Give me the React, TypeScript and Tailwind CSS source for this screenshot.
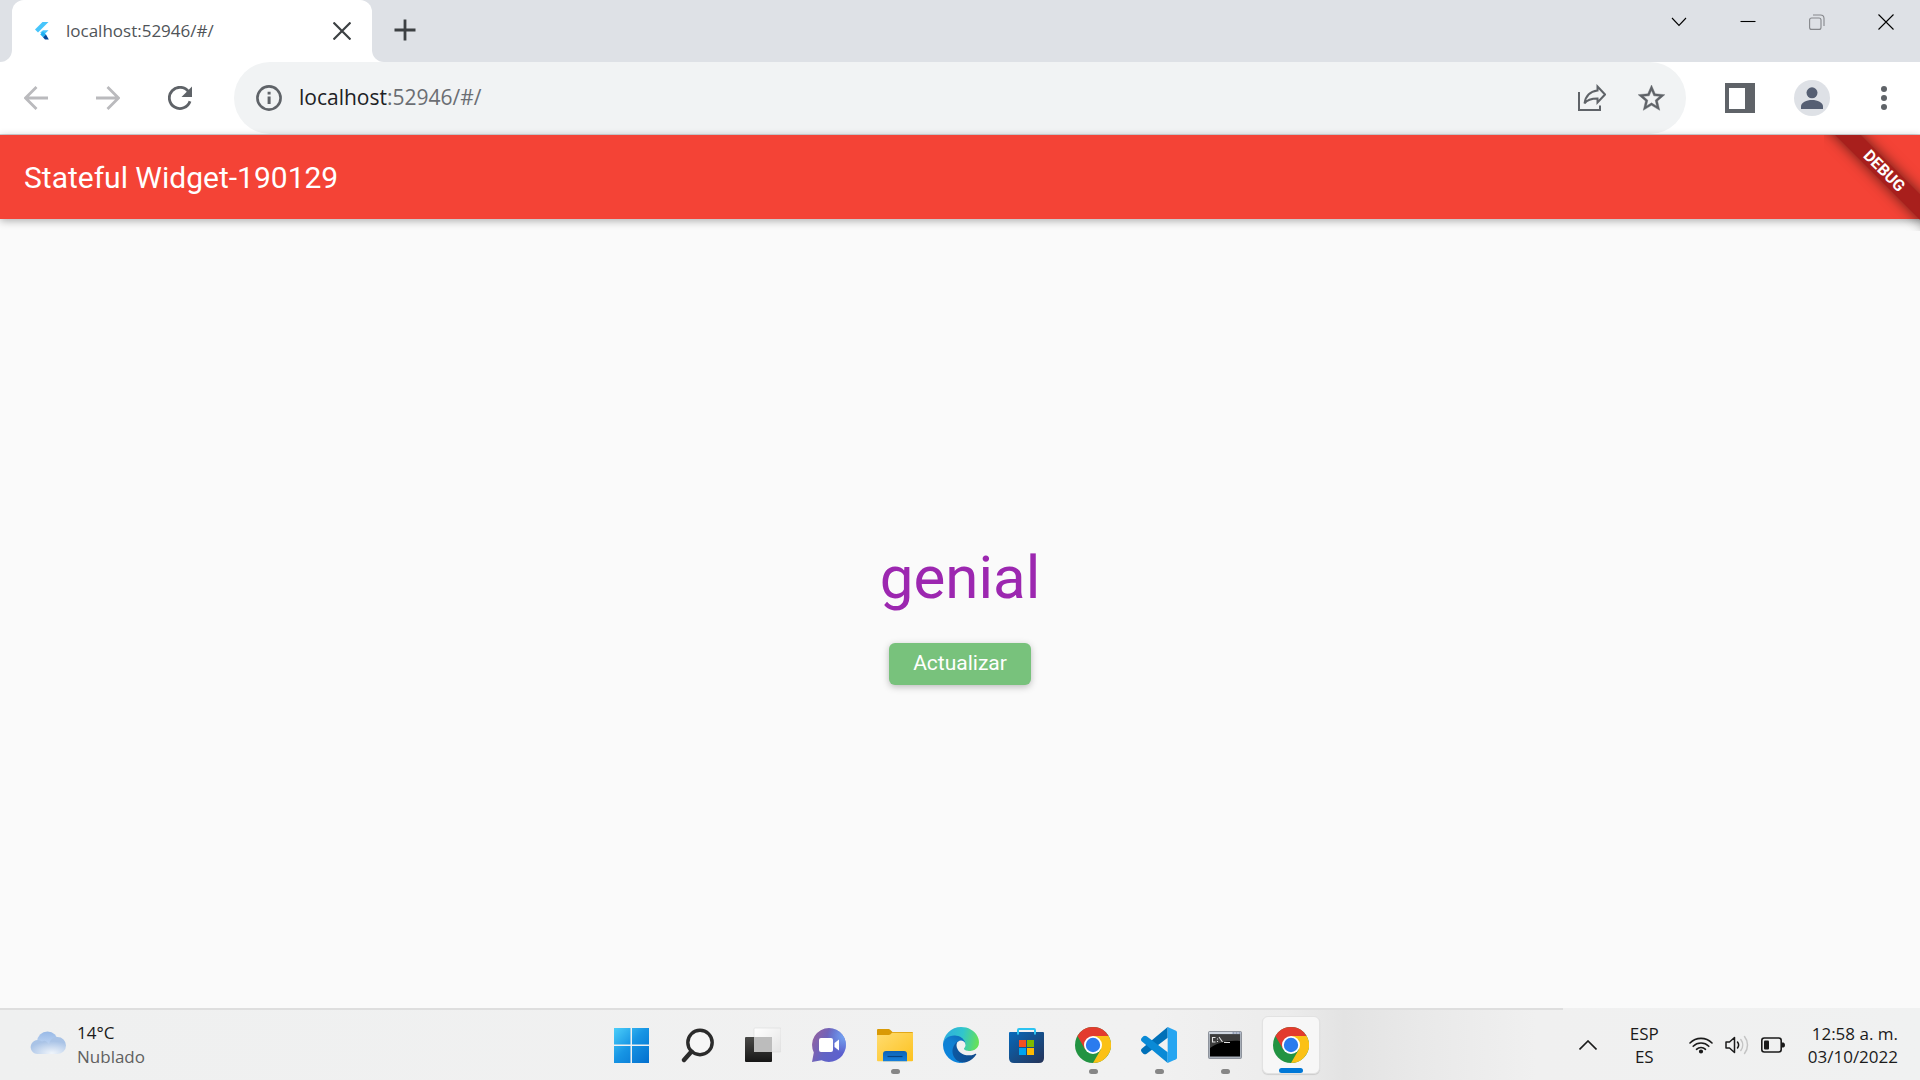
import type { ReactNode } from "react";

const UI = "font-['Open_Sans','Noto_Sans',sans-serif]";

/* ---------- browser icons ---------- */

function FlutterIcon() {
  return (
    <svg viewBox="0 0 16 20" className="h-5 w-4">
      <path d="M8.500 1H14.500L4 11.400 1 8.600Z" fill="#47c5fb" />
      <path d="M9 9.300H14.500L9.500 14.200 6.200 11.600Z" fill="#47c5fb" />
      <path d="M6.200 13.200 9 10.700 12 13.400 9 16.200Z" fill="#1fb0f2" />
      <path d="M9 16.200 12 13.400 14.800 18.500H11Z" fill="#00479a" />
    </svg>
  );
}

function ArrowIcon({ flip = false }: { flip?: boolean }) {
  return (
    <svg viewBox="0 0 24 24" className="size-6" fill="none" stroke="#bababd" strokeWidth="2.8">
      {flip ? <path d="M0 12H22.5M11.5 1 22.5 12 11.5 23" /> : <path d="M24 12H1.5M12.5 1 1.5 12 12.5 23" />}
    </svg>
  );
}

function ReloadIcon() {
  return (
    <svg viewBox="0 0 24 24" className="size-6">
      <path d="M20.6 5.8A10.6 10.6 0 1 0 22 15.2" fill="none" stroke="#5f6368" strokeWidth="2.8" />
      <path d="M24 .5V11H13.5Z" fill="#5f6368" />
    </svg>
  );
}

function InfoIcon() {
  return (
    <svg viewBox="0 0 26 26" className="size-[26px]">
      <circle cx="13" cy="13" r="11.6" fill="none" stroke="#5f6368" strokeWidth="2.6" />
      <path d="M11.6 6.7h3v2.8h-3zM11.6 11.5h3v7.5h-3z" fill="#5f6368" />
    </svg>
  );
}

function ShareIcon() {
  return (
    <svg viewBox="0 0 28 28" className="size-7" fill="none" stroke="#5f6368" strokeWidth="2">
      <path d="M1 8V26H22V21.5" />
      <path d="M19.5 2.5 27 10.5 19.5 18.5V14.5C13.500 14.500 9 16 6.500 19.500 7.500 12 11.500 7.500 19.500 6.500Z" />
    </svg>
  );
}

function StarIcon() {
  return (
    <svg viewBox="2 2 20 19.500" className="h-[26px] w-[27px]" fill="#5f6368" stroke="#5f6368" strokeWidth=".3">
      <path d="M22 9.240l-7.190-.620L12 2 9.190 8.630 2 9.240l5.460 4.730L5.820 21 12 17.270 18.180 21l-1.630-7.030L22 9.240zM12 15.400l-3.760 2.270 1-4.280-3.320-2.880 4.380-.380L12 6.100l1.710 4.040 4.380.380-3.320 2.880 1 4.280L12 15.400z" />
    </svg>
  );
}

function PanelIcon() {
  return (
    <svg viewBox="0 0 30 30" className="size-[30px]">
      <path fillRule="evenodd" d="M0 0H30V30H0ZM4 5V26H20V5Z" fill="#5f6368" />
    </svg>
  );
}

function AvatarIcon() {
  return (
    <svg viewBox="0 0 36 36" className="size-9">
      <circle cx="18" cy="18" r="18" fill="#dee1e6" />
      <circle cx="18" cy="12.800" r="5.500" fill="#565f73" />
      <path d="M7 29V26.500C7 22.500 12.500 20 18 20S29 22.500 29 26.500V29Z" fill="#565f73" />
    </svg>
  );
}

function DotsIcon() {
  return (
    <svg viewBox="0 0 6 26" className="h-[26px] w-1.5" fill="#5f6368">
      <circle cx="3" cy="4" r="3" />
      <circle cx="3" cy="13" r="3" />
      <circle cx="3" cy="22" r="3" />
    </svg>
  );
}

/* ---------- taskbar icons ---------- */

function CloudIcon() {
  return (
    <svg viewBox="0 0 36 24" className="mb-1 h-6 w-9">
      <defs>
        <linearGradient id="cloudBack" x1="0" y1="0" x2="0" y2="1">
          <stop offset="0" stopColor="#98b9e6" />
          <stop offset="1" stopColor="#d3e4fa" />
        </linearGradient>
        <radialGradient id="cloudFront" cx=".6" cy=".95" r=".7">
          <stop offset="0" stopColor="#f0f5fb" />
          <stop offset="1" stopColor="#a9c3e6" />
        </radialGradient>
      </defs>
      <circle cx="17.500" cy="11" r="10.500" fill="url(#cloudBack)" />
      <path d="M7.500 23A7 7 0 1 1 12 10.500C15 8.500 17 11 19 13 20 8.500 23.500 6 27.500 6A8.500 8.500 0 0 1 27.500 23Z" fill="url(#cloudFront)" />
    </svg>
  );
}

function WindowsIcon() {
  return (
    <svg viewBox="0 0 36 36" className="size-9">
      <defs>
        <linearGradient id="win" x1="0" y1="0" x2="35" y2="35" gradientUnits="userSpaceOnUse">
          <stop offset="0" stopColor="#4fd2fb" />
          <stop offset=".5" stopColor="#1795e4" />
          <stop offset="1" stopColor="#0471cf" />
        </linearGradient>
      </defs>
      <path d="M1 1H17.500V17.500H1ZM19 1H36V17.500H19ZM1 19H17.500V36H1ZM19 19H36V36H19Z" fill="url(#win)" />
    </svg>
  );
}

function SearchIcon() {
  return (
    <svg viewBox="0 0 36 36" className="size-9" fill="none" stroke="#2b2b2b">
      <circle cx="21" cy="15.500" r="12.200" strokeWidth="3.400" fill="#f6f6f6" />
      <path d="M12.500 24.500 5 33" strokeWidth="4.400" strokeLinecap="round" />
    </svg>
  );
}

function TaskViewIcon() {
  return (
    <svg viewBox="0 0 36 36" className="size-9">
      <defs>
        <linearGradient id="tvDark" x1="0" y1="0" x2="0" y2="1">
          <stop offset="0" stopColor="#4a4a48" />
          <stop offset="1" stopColor="#161616" />
        </linearGradient>
        <linearGradient id="tvLight" x1="0" y1="0" x2="1" y2="1">
          <stop offset="0" stopColor="#ffffff" />
          <stop offset="1" stopColor="#e4e4e4" />
        </linearGradient>
      </defs>
      <rect x="9" y="1" width="27" height="24" rx="1" fill="url(#tvLight)" stroke="#dadada" strokeWidth=".6" />
      <rect x="0" y="10" width="27" height="25" rx="1" fill="url(#tvDark)" />
      <path d="M9 10H27V25H9Z" fill="#bcbcbc" />
    </svg>
  );
}

function ChatIcon() {
  return (
    <svg viewBox="0 0 36 36" className="size-9">
      <defs>
        <linearGradient id="chat" x1="0" y1=".2" x2="1" y2=".7">
          <stop offset="0" stopColor="#94619f" />
          <stop offset=".5" stopColor="#6264c4" />
          <stop offset="1" stopColor="#5b5fd0" />
        </linearGradient>
        <radialGradient id="chatGlow" cx=".95" cy=".25" r=".5">
          <stop offset="0" stopColor="#74a4f2" />
          <stop offset="1" stopColor="#74a4f2" stopOpacity="0" />
        </radialGradient>
      </defs>
      <path d="M18 1A17 17 0 1 1 10.500 33.300L1 35 2.800 25.500A17 17 0 0 1 18 1Z" fill="url(#chat)" />
      <path d="M18 1A17 17 0 1 1 10.500 33.300L1 35 2.800 25.500A17 17 0 0 1 18 1Z" fill="url(#chatGlow)" />
      <rect x="8" y="11" width="14" height="14" rx="2" fill="#fff" />
      <path d="M23.500 16 28 12.500V23.500L23.500 20Z" fill="#fff" />
    </svg>
  );
}

function FolderIcon() {
  return (
    <svg viewBox="0 0 36 36" className="size-9">
      <defs>
        <linearGradient id="folder" x1="0" y1="0" x2="1" y2="1">
          <stop offset="0" stopColor="#ffdc70" />
          <stop offset="1" stopColor="#fdc21f" />
        </linearGradient>
        <linearGradient id="folderBlue" x1="0" y1="0" x2="0" y2="1">
          <stop offset="0" stopColor="#0d62b5" />
          <stop offset="1" stopColor="#1580dd" />
        </linearGradient>
      </defs>
      <path d="M0 3Q0 2 1 2H11.500Q12.500 2 13.200 2.800L15.500 5H35Q36 5 36 6V12H0Z" fill="#d99a06" />
      <path d="M0 8H11.500Q12.800 8 13.600 7.200L15 5.800H36V33.500Q36 34.300 35 34.300H1Q0 34.300 0 33.500Z" fill="url(#folder)" />
      <path d="M6 34.300V27Q6 24 9 24H27Q30 24 30 27V34.300Z" fill="url(#folderBlue)" />
      <path d="M10.500 29.500H25.500" stroke="#08427f" strokeWidth="1.200" />
    </svg>
  );
}

function EdgeIcon() {
  return (
    <svg viewBox="0 0 256 256" className="size-9">
      <defs>
        <linearGradient id="edgeA" x1="59" y1="177" x2="237" y2="177" gradientUnits="userSpaceOnUse">
          <stop offset="0" stopColor="#0c59a4" />
          <stop offset="1" stopColor="#114a8b" />
        </linearGradient>
        <linearGradient id="edgeB" x1="136" y1="80" x2="40" y2="215" gradientUnits="userSpaceOnUse">
          <stop offset="0" stopColor="#0f6fbe" />
          <stop offset=".4" stopColor="#1180d2" />
          <stop offset="1" stopColor="#0b84dc" />
        </linearGradient>
        <linearGradient id="edgeC" x1="20" y1="60" x2="245" y2="110" gradientUnits="userSpaceOnUse">
          <stop offset="0" stopColor="#2eb0dd" />
          <stop offset=".5" stopColor="#31c6cc" />
          <stop offset=".8" stopColor="#4fd58a" />
          <stop offset="1" stopColor="#66e05a" />
        </linearGradient>
      </defs>
      <path fill="url(#edgeA)" d="M231 190.500c-3.400 1.800-6.900 3.400-10.500 4.800a102 102 0 0 1-36 6.400c-47.300 0-88.500-32.500-88.500-74.300a31.500 31.500 0 0 1 16.400-27.500c-42.800 1.800-53.800 46.400-53.800 72.500 0 74 68.100 81.500 82.900 81.500 7.900 0 19.800-2.300 27-4.600l1.300-.4a128.300 128.300 0 0 0 66.600-52.800 4 4 0 0 0-5.400-5.600z" />
      <path fill="url(#edgeB)" d="M105.700 241.400a79.200 79.200 0 0 1-22.700-21.300 80.700 80.700 0 0 1 29.500-120.200c3.100-1.400 8.400-4.100 15.500-4a32.400 32.400 0 0 1 25.700 13 31.900 31.900 0 0 1 6.300 18.700c0-.2 24.500-79.600-80-79.600-43.900 0-80 41.700-80 78.200a130.200 130.200 0 0 0 12.100 56 128 128 0 0 0 156.400 67.100 75.500 75.500 0 0 1-62.800-7.900z" />
      <path fill="url(#edgeC)" d="M152.300 148.900c-.8 1-3.300 2.500-3.300 5.600 0 2.600 1.700 5.100 4.700 7.200 14.400 10 41.500 8.700 41.600 8.700a59.600 59.600 0 0 0 30.200-8.300 61.400 61.400 0 0 0 30.400-52.900c.3-22.400-8-37.300-11.300-43.900C223.500 23.900 177.700 0 128 0A128 128 0 0 0 0 126.200c.5-36.500 36.800-66 80-66 3.500 0 23.500.3 42 10a72.600 72.600 0 0 1 30.900 29.300c6.100 10.600 7.200 24.100 7.200 29.500s-2.700 13.300-7.800 19.900z" />
    </svg>
  );
}

function StoreIcon() {
  return (
    <svg viewBox="0 0 36 36" className="size-9">
      <defs>
        <linearGradient id="store" x1="0" y1="0" x2="1" y2="1">
          <stop offset="0" stopColor="#0669bb" />
          <stop offset="1" stopColor="#263357" />
        </linearGradient>
      </defs>
      <path d="M0 6Q0 5 1 5H34Q35 5 35 6V31Q35 36 30 36H5Q0 36 0 31Z" fill="url(#store)" />
      <path d="M9 7.500V3Q9 2 10 2H25Q26 2 26 3V7.500" fill="none" stroke="#2cc3f1" strokeWidth="2" />
      <path d="M10 13H17V20H10Z" fill="#f25022" />
      <path d="M18 13H25V20H18Z" fill="#7fba00" />
      <path d="M10 21H17V28H10Z" fill="#00a4ef" />
      <path d="M18 21H25V28H18Z" fill="#ffb900" />
    </svg>
  );
}

function ChromeIcon() {
  return (
    <svg viewBox="0 0 48 48" className="size-9">
      <circle cx="24" cy="24" r="24" fill="#229342" />
      <path d="M24 12H44.785A24 24 0 0 1 24 48L34.400 30 24 24Z" fill="#fbc116" />
      <path d="M24 12H44.785A24 24 0 0 0 3.215 12L13.600 30 24 24Z" fill="#e33b2e" />
      <circle cx="24" cy="24" r="12" fill="#fff" />
      <circle cx="24" cy="24" r="9.600" fill="#2b7bee" />
    </svg>
  );
}

function VsCodeIcon() {
  return (
    <svg viewBox="0 0 108 108" className="size-9">
      <path d="M80 0V32L17 80Q12 84 7 80L2 75Q-2 70 2 65Z" fill="#0070b8" />
      <path d="M17 28 80 76V108L2 43Q-2 38 2 33L7 28Q12 24 17 28Z" fill="#0a8ad6" />
      <path d="M80 0 105 11Q108 13 108 16V92Q108 95 105 97L80 108Z" fill="#26a5f1" />
    </svg>
  );
}

function TerminalIcon() {
  return (
    <svg viewBox="0 0 36 36" className="size-9">
      <rect x="1.500" y="4.500" width="33" height="27" rx="1" fill="#a9b0ba" stroke="#7d848e" strokeWidth=".8" />
      <path d="M2 5H34V7H2Z" fill="#cfd6e0" />
      <path d="M25.500 5.500h2v1h-2zM28.500 5.500h2v1h-2zM31.500 5.500h2v1h-2z" fill="#5b6b90" />
      <path d="M3 7.500H33V29.500H3Z" fill="#000" />
      <path d="M3 7.500H33V14C20 13 10 16 3 21Z" fill="#3c3c3c" />
      <path d="M8.500 10.500H5.500V15H8.500M10.500 11.500v1M10.500 14v1M12 10 15.500 15M17 15.500H23" fill="none" stroke="#e2e2e2" strokeWidth="1.100" />
    </svg>
  );
}

function WifiIcon() {
  return (
    <svg viewBox="0 0 24 18" className="h-[18px] w-6" fill="none" stroke="#1b1b1b" strokeWidth="1.600" strokeLinecap="round">
      <path d="M1 7A15.500 15.500 0 0 1 23 7" />
      <path d="M4.200 10.300A11 11 0 0 1 19.800 10.300" />
      <path d="M7.500 13.300A6.500 6.500 0 0 1 16.500 13.300" />
      <circle cx="12" cy="15.500" r="1.300" fill="#1b1b1b" />
    </svg>
  );
}

function VolumeIcon() {
  return (
    <svg viewBox="0 0 24 20" className="h-5 w-6" fill="none" stroke="#1b1b1b" strokeWidth="1.500" strokeLinecap="round" strokeLinejoin="round">
      <path d="M1 7H4.500L9.500 2.500V17.500L4.500 13H1Z" />
      <path d="M12.500 7A5 5 0 0 1 12.500 13" />
      <path d="M15.800 4.500A9 9 0 0 1 15.800 15.500M19.500 1.500A13.500 13.500 0 0 1 19.500 18.500" stroke="#c4c4c4" />
    </svg>
  );
}

function BatteryIcon() {
  return (
    <svg viewBox="0 0 24 16" className="h-4 w-6">
      <rect x=".8" y="1" width="19.400" height="14" rx="2.500" fill="none" stroke="#1b1b1b" strokeWidth="1.600" />
      <rect x="3" y="3.500" width="5" height="9" rx="1" fill="#1b1b1b" />
      <path d="M21 5.500h1.500Q24 6 24 8t-1.500 2.500H21Z" fill="#1b1b1b" />
    </svg>
  );
}

/* ---------- browser window ---------- */

function WindowButton({ label, children }: { label: string; children: ReactNode }) {
  return (
    <button aria-label={label} className="grid h-11 w-[69px] place-items-center">
      <svg viewBox="0 0 16 16" className="size-4" fill="none" stroke="#000" strokeWidth="1.100">
        {children}
      </svg>
    </button>
  );
}

function TabStrip() {
  return (
    <div className="flex h-[62px] bg-white">
      <div className="w-3 rounded-br-xl bg-[#dee1e6]" />
      <div className="bg-[#dee1e6]">
        <div className="flex h-full w-[360px] items-center rounded-t-xl bg-white pl-[22px] pr-[21px]">
          <FlutterIcon />
          <span className="ml-4 flex-1 text-[17px] text-[#505458]">localhost:52946/#/</span>
          <button aria-label="Cerrar pestaña">
            <svg viewBox="0 0 18 18" className="size-[18px]" fill="none" stroke="#3c4043" strokeWidth="2.200">
              <path d="M.5.500 17.500 17.500M17.500.500.500 17.500" />
            </svg>
          </button>
        </div>
      </div>
      <div className="flex flex-1 items-start justify-between rounded-bl-xl bg-[#dee1e6]">
        <button aria-label="Nueva pestaña" className="grid h-[60px] w-[66px] place-items-center">
          <svg viewBox="0 0 22 22" className="size-[22px]" stroke="#3c4043" strokeWidth="2.800">
            <path d="M11 .5V21.500M.5 11H21.500" />
          </svg>
        </button>
        <div className="flex">
          <WindowButton label="Buscar pestañas">
            <path d="M1 4 8 11.500 15 4" />
          </WindowButton>
          <WindowButton label="Minimizar">
            <path d="M.5 7.500H15.500" />
          </WindowButton>
          <WindowButton label="Restaurar">
            <g stroke="#85878b">
              <rect x=".6" y="4" width="11.400" height="11.400" rx="2" />
              <path d="M4 1H11.500Q15 1 15 4.500V12" />
            </g>
          </WindowButton>
          <WindowButton label="Cerrar">
            <path d="M.5.500 15.500 15.500M15.500.500.500 15.500" />
          </WindowButton>
        </div>
      </div>
    </div>
  );
}

function ToolButton({ label, children }: { label: string; children: ReactNode }) {
  return (
    <button aria-label={label} className="grid h-[72px] w-[72px] place-items-center">
      {children}
    </button>
  );
}

function Toolbar() {
  return (
    <div className="flex h-[73px] border-b border-[#d3d5d8] bg-white">
      <ToolButton label="Atrás"><ArrowIcon /></ToolButton>
      <ToolButton label="Adelante"><ArrowIcon flip /></ToolButton>
      <ToolButton label="Recargar"><ReloadIcon /></ToolButton>
      <div className="mx-[18px] flex flex-1 items-center rounded-full bg-[#f1f3f4] pl-[22px] pr-[21px]">
        <button aria-label="Información del sitio"><InfoIcon /></button>
        <p className="ml-[17px] flex-1 text-[21px] text-[#6b6e73]">
          <span className="text-[#202124]">localhost</span>:52946/#/
        </p>
        <button aria-label="Compartir" className="mr-8"><ShareIcon /></button>
        <button aria-label="Añadir a marcadores"><StarIcon /></button>
      </div>
      <ToolButton label="Panel lateral"><PanelIcon /></ToolButton>
      <ToolButton label="Perfil"><AvatarIcon /></ToolButton>
      <ToolButton label="Menú"><DotsIcon /></ToolButton>
    </div>
  );
}

function FlutterApp() {
  return (
    <main className="relative flex flex-1 flex-col bg-[#fafafa] font-[Roboto,sans-serif]">
      <header className="flex h-[84px] items-center bg-[#f44336] px-6 shadow-[0_2px_8px_rgba(0,0,0,0.3)]">
        <h1 className="text-[30px] text-white">Stateful Widget-190129</h1>
      </header>
      <div className="absolute right-0 top-0 size-24 overflow-hidden">
        <div className="absolute -right-16 top-[27px] flex h-[18px] w-[200px] rotate-45 items-center justify-center bg-[#a81f1c] text-[16px] font-bold text-white shadow-[0_0_14px_rgba(0,0,0,0.6)]">
          DEBUG
        </div>
      </div>
      <section className="flex flex-1 flex-col items-center justify-center gap-[30px]">
        <p className="text-[60px] leading-[70px] text-[#9c27b0]">genial</p>
        <button className="h-[42px] rounded-md bg-[#78c27c] px-6 text-[21px] text-white shadow-[0_2px_7px_rgba(0,0,0,0.25)]">
          Actualizar
        </button>
      </section>
    </main>
  );
}

/* ---------- taskbar ---------- */

type TaskItem = { label: string; icon: ReactNode; state?: "open" | "active" };

const tasks: TaskItem[] = [
  { label: "Inicio", icon: <WindowsIcon /> },
  { label: "Buscar", icon: <SearchIcon /> },
  { label: "Vista de tareas", icon: <TaskViewIcon /> },
  { label: "Chat", icon: <ChatIcon /> },
  { label: "Explorador de archivos", icon: <FolderIcon />, state: "open" },
  { label: "Microsoft Edge", icon: <EdgeIcon /> },
  { label: "Microsoft Store", icon: <StoreIcon /> },
  { label: "Google Chrome", icon: <ChromeIcon />, state: "open" },
  { label: "Visual Studio Code", icon: <VsCodeIcon />, state: "open" },
  { label: "Símbolo del sistema", icon: <TerminalIcon />, state: "open" },
  { label: "Google Chrome (activo)", icon: <ChromeIcon />, state: "active" },
];

function TaskButton({ label, icon, state }: TaskItem) {
  const active = state === "active";
  return (
    <button
      aria-label={label}
      className={
        active
          ? "relative mx-1 grid h-[58px] w-[58px] place-items-center rounded-md border border-[#e2e2e2] bg-[#f7f7f7] shadow-[0_1px_1px_rgba(0,0,0,0.12)]"
          : "relative mx-1 grid h-[58px] w-[58px] place-items-center"
      }
    >
      {icon}
      {state && (
        <span
          className={
            active
              ? "absolute bottom-0 left-4 h-[5px] w-6 rounded-full bg-[#0078d7]"
              : "absolute bottom-0 left-[25px] h-[5px] w-[9px] rounded-full bg-[#868686]"
          }
        />
      )}
    </button>
  );
}

function Taskbar() {
  return (
    <footer className="bg-[linear-gradient(to_right,#eff0f0_0%,#f1f1f1_60%,#ececec_67%,#e3e3e3_70%,#e9e9e9_74%,#f0f0f0_80%,#f0f1f1_100%)]">
      <div className="h-0.5 w-[81.4%] bg-[#dedede]" />
      <div className="grid h-[70px] grid-cols-[1fr_auto_1fr] items-center">
        <button className="flex items-center gap-[11px] justify-self-start pl-[30px] text-left text-[17px] leading-6">
          <CloudIcon />
          <span className="flex flex-col">
            <span className="text-[#1b1b1b]">14°C</span>
            <span className="text-[#606060]">Nublado</span>
          </span>
        </button>
        <nav className="flex pl-[2px]" aria-label="Barra de tareas">
          {tasks.map((t) => (
            <TaskButton key={t.label} {...t} />
          ))}
        </nav>
        <div className="flex items-center justify-self-end pr-[22px] text-[17px] leading-[23px] text-[#1b1b1b]">
          <button aria-label="Mostrar iconos ocultos">
            <svg viewBox="0 0 18 10" className="h-2.5 w-[18px]" fill="none" stroke="#1b1b1b" strokeWidth="1.600">
              <path d="M.5 9.500 9 1 17.500 9.500" />
            </svg>
          </button>
          <button className="ml-[33px] text-center">
            ESP<br />ES
          </button>
          <button aria-label="Red, volumen y batería" className="ml-[30px] flex items-center gap-3">
            <WifiIcon />
            <VolumeIcon />
            <BatteryIcon />
          </button>
          <button className="ml-[23px] text-right">
            12:58 a. m.<br />03/10/2022
          </button>
        </div>
      </div>
    </footer>
  );
}

export default function App() {
  return (
    <div className={`flex min-h-screen flex-col ${UI}`}>
      <TabStrip />
      <Toolbar />
      <FlutterApp />
      <Taskbar />
    </div>
  );
}
